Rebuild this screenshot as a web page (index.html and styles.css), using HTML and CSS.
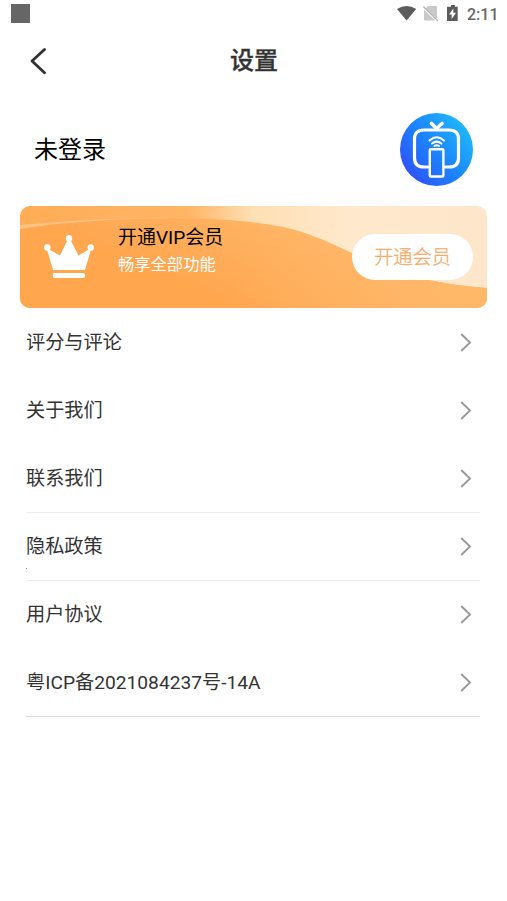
FILE: index.html
```
<!DOCTYPE html>
<html lang="zh-CN">
<head>
<meta charset="utf-8">
<title>设置</title>
<link rel="stylesheet" href="styles.css">
</head>
<body>
<div class="status">
  <span class="app-dot"></span>
  <svg class="status-icons" width="66" height="20" viewBox="0 0 66 20">
    <path d="M0 4Q9.600 -2 19.200 4L9.600 15.500Z" fill="#5c5c5c"/>
    <path d="M31 1h8q1 0 1 1v12L28.500 3.500Z" fill="#c9c9c9"/>
    <path d="M27 4.500L38 15.500H28q-1 0-1-1Z" fill="#c9c9c9"/>
    <path d="M26.300 1.500L41 16" stroke="#b5b5b5" stroke-width="1.200"/>
    <path d="M54 0h4v1.700h2.700v14.300h-10.700V1.700H54Z" fill="#5c5c5c"/>
    <path d="M56.300 3.500L52 9.500h2.700V14L59 7.800h-2.700Z" fill="#fff"/>
  </svg>
  <span class="time">2:11</span>
</div>
<header class="header">
  <svg class="back" width="20" height="30" viewBox="0 0 20 30"><path d="M15.500 3.500L3 15l12.500 11.700" fill="none" stroke="#333" stroke-width="2.900" stroke-linecap="round" stroke-linejoin="round"/></svg>
  <h1>设置</h1>
</header>
<section class="profile">
  <span>未登录</span>
  <svg width="74" height="74" viewBox="0 0 74 74">
    <defs><linearGradient id="blue" x1=".1" y1=".8" x2=".9" y2=".15"><stop stop-color="#2d55fb"/><stop offset=".5" stop-color="#1b87fd"/><stop offset="1" stop-color="#20b9fb"/></linearGradient></defs>
    <circle cx="36.500" cy="36.500" r="36.500" fill="url(#blue)"/>
    <g fill="none" stroke="#fff" stroke-linecap="round">
      <path d="M28 54H24q-9.500 0-9.500-9V26q0-9 9.500-9H49q9.500 0 9.500 9V45q0 9-9.500 9H45" stroke-width="3.200"/>
      <path d="M31.500 10.500l5 5L42 10.500" stroke-width="3.600"/>
      <rect x="29.800" y="36.300" width="13.600" height="27.200" rx="1" stroke-width="2.400"/>
      <path d="M29.500 27.500q7.200-6.400 14.400 0M32 30.600q4.700-4 9.400 0M34.400 33q2.300-1.600 4.600 0" stroke-width="2"/>
    </g>
  </svg>
</section>
<section class="vip">
  <svg class="vip-bg" width="467" height="102" viewBox="0 0 467 102">
    <defs>
      <linearGradient id="sky"><stop offset="0" stop-color="#ffac55"/><stop offset=".36" stop-color="#ffb565"/><stop offset=".5" stop-color="#ffdfb4"/><stop offset=".7" stop-color="#ffe8cb"/><stop offset="1" stop-color="#fee6cb"/></linearGradient>
      <linearGradient id="wave" gradientUnits="userSpaceOnUse" x1="220" y1="102" x2="260" y2="10"><stop stop-color="#ffa64f"/><stop offset="1" stop-color="#ffb566"/></linearGradient>
      <linearGradient id="right"><stop offset=".45" stop-color="#ffb868" stop-opacity="0"/><stop offset="1" stop-color="#ffb868"/></linearGradient>
      <linearGradient id="rim"><stop stop-color="#ffc288"/><stop offset=".5" stop-color="#ffbd79"/><stop offset=".6" stop-color="#ffc588" stop-opacity="0"/></linearGradient>
    </defs>
    <path d="M0 0H467V102H0Z" fill="url(#sky)"/>
    <path d="M0 23C62 13 145 11 190 13C235 15 264 20 282 26C305 34 317 40 332 47C367 63 400 77 467 82V102H0Z" fill="url(#wave)"/>
    <path d="M0 23C62 13 145 11 190 13C235 15 264 20 282 26C305 34 317 40 332 47C367 63 400 77 467 82V102H0Z" fill="url(#right)"/>
    <path d="M0 19C62 13 145 10 190 12C240 13 265 17 285 21C260 18 220 14 190 13C145 11 62 13 0 23Z" fill="url(#rim)"/>
  </svg>
  <svg class="crown" width="52" height="46" viewBox="0 0 52 46" fill="#fff">
    <circle cx="4.300" cy="12.500" r="3.200"/><circle cx="26" cy="3.300" r="3.200"/><circle cx="47.700" cy="12.500" r="3.200"/>
    <path d="M3.500 13L17 20.500L25 4h2L35.500 20.500L48.500 13L42 35H10Z"/>
    <rect x="9.700" y="38" width="32.300" height="5" rx="2"/>
  </svg>
  <div class="vip-copy"><strong>开通VIP会员</strong><span>畅享全部功能</span></div>
  <button>开通会员</button>
</section>
<nav class="menu">
  <a>评分与评论<svg width="12" height="20" viewBox="0 0 12 20"><path d="M1.200 2L10 10.500L1.200 19"/></svg></a>
  <a>关于我们<svg width="12" height="20" viewBox="0 0 12 20"><path d="M1.200 2L10 10.500L1.200 19"/></svg></a>
  <a class="line">联系我们<svg width="12" height="20" viewBox="0 0 12 20"><path d="M1.200 2L10 10.500L1.200 19"/></svg></a>
  <a class="line speck">隐私政策<svg width="12" height="20" viewBox="0 0 12 20"><path d="M1.200 2L10 10.500L1.200 19"/></svg></a>
  <a>用户协议<svg width="12" height="20" viewBox="0 0 12 20"><path d="M1.200 2L10 10.500L1.200 19"/></svg></a>
  <a class="line last">粤ICP备2021084237号-14A<svg width="12" height="20" viewBox="0 0 12 20"><path d="M1.200 2L10 10.500L1.200 19"/></svg></a>
</nav>
</body>
</html>
```
FILE: styles.css
```
* { box-sizing: border-box; }
body {
  margin: 0;
  background: #fff;
  color: #333;
  font-family: Roboto, "Noto Sans CJK SC", sans-serif;
}
.status {
  height: 28px;
  display: flex;
  align-items: flex-start;
  padding: 0 9px 0 11px;
}
.app-dot { width: 19px; height: 19px; margin-top: 4px; background: #666; }
.status-icons { margin: 5px 4px 0 auto; }
.time {
  width: 31px;
  font-size: 16px;
  font-weight: 500;
  line-height: 29px;
  color: #666;
  white-space: nowrap;
}
.header {
  height: 66px;
  display: grid;
  grid-template-columns: 49px 1fr 48px;
  align-items: center;
}
.back { margin-left: 29px; }
h1 {
  margin: 0;
  text-align: center;
  font-size: 24px;
  line-height: 36px;
  font-weight: 500;
  -webkit-text-stroke: .3px #333;
}
.profile {
  height: 112px;
  padding: 0 33px 0 34px;
  display: flex;
  align-items: center;
  justify-content: space-between;
  font-size: 24px;
  color: #000;
}
.profile span { padding-bottom: 5px; }
.vip {
  position: relative;
  width: 467px;
  height: 102px;
  margin: 0 20px;
  border-radius: 10px;
  overflow: hidden;
  display: flex;
}
.vip-bg { position: absolute; left: 0; top: 0; }
.crown { position: relative; margin: 29px 0 0 23px; flex: none; }
.vip-copy {
  position: relative;
  margin: 18px 0 0 23px;
  display: flex;
  flex-direction: column;
}
.vip-copy strong {
  font-size: 19px;
  font-weight: 400;
  line-height: 28px;
  color: #000;
}
.vip-copy span {
  font-size: 16.3px;
  line-height: 26px;
  color: #fff;
}
.vip button {
  position: relative;
  width: 121px;
  height: 46px;
  margin: 28px 14px 0 auto;
  padding: 2px 0 0;
  border: 0;
  border-radius: 23px;
  background: #fff;
  color: #f7ab68;
  font: 300 19.2px/44px Roboto, "Noto Sans CJK SC", sans-serif;
  -webkit-text-stroke: .3px #f7ab68;
}
.menu { padding: 1px 27px 0 26px; }
.menu a {
  position: relative;
  height: 68px;
  display: flex;
  align-items: center;
  justify-content: space-between;
  padding: 0 8px 3px 0;
  font-size: 19.2px;
  border-bottom: 1px solid transparent;
}
.menu svg { margin-top: 1px; fill: none; stroke: #999; stroke-width: 1.9; }
.menu .line { border-color: #eee; }
.menu .last { border-color: #ddd; }
.speck::after {
  content: "";
  position: absolute;
  left: 0;
  bottom: 11px;
  width: 1px;
  height: 1px;
  background: #999;
}
```
